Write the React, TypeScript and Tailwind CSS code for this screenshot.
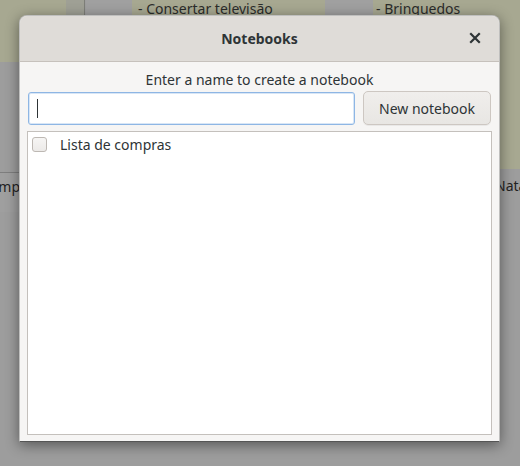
import React from "react";

export default function App() {
  return (
    <div
      className="relative w-[520px] h-[466px] overflow-hidden bg-[#9d9d9d]"
      style={{ fontFamily: '"Noto Sans", "Open Sans", sans-serif' }}
    >
      {/* dimmed background application */}
      <div className="absolute left-0 top-0 w-[66px] h-[62px] bg-[#a7a891]" />
      <div className="absolute left-[66px] top-0 w-[19px] h-[62px] bg-[#9fa095] border-r border-[#7d7e78]" />
      <div className="absolute left-[86px] top-0 w-[46px] h-[62px] bg-[#a0a0a0]" />
      <div className="absolute left-[132px] top-0 w-[193px] h-[62px] bg-[#a7a891] pl-[6px] text-[14px] leading-[18px] text-[#2b2c2a]">
        - Consertar televisão
      </div>
      <div className="absolute left-[325px] top-0 w-[48px] h-[62px] bg-[#a0a0a0]" />
      <div className="absolute left-[373px] top-0 w-[147px] h-[169px] bg-[#a7a891] pl-[3px] text-[14px] leading-[18px] text-[#2b2c2a]">
        - Bringuedos
      </div>
      <div className="absolute left-0 top-[172px] w-[20px] h-[40px] border-t border-[#7e7e7e] bg-[#9f9f9f] text-[14px] leading-[28px] text-[#222] overflow-hidden whitespace-nowrap">
        <span className="ml-[-19px]">Comp</span>
      </div>
      <div className="absolute left-[495px] top-[169px] w-[25px] h-[40px] text-[14px] leading-[34px] text-[#222] overflow-hidden whitespace-nowrap">
        Natal
      </div>

      {/* dialog */}
      <div className="absolute left-[19px] top-[15px] w-[481px] h-[427px] rounded-t-[8px] bg-[#f6f5f4] border border-[#6e6e6e]/40 border-b-[#555] shadow-[0_3px_14px_rgba(0,0,0,0.45)] flex flex-col overflow-hidden">
        <div className="h-[46px] shrink-0 bg-[#dfdcd8] border-b border-[#c6c1bc] flex items-center relative">
          <div className="flex-1 text-center text-[14px] font-bold text-[#2e3436] -mt-[1px]">Notebooks</div>
          <svg
            className="absolute right-[18px] top-[16px]"
            width="12"
            height="12"
            viewBox="0 0 12 12"
          >
            <path d="M2 2 L10 10 M10 2 L2 10" stroke="#2e3436" strokeWidth="2.2" strokeLinecap="square" />
          </svg>
        </div>
        <div className="flex-1 flex flex-col px-[7px] pt-[8px] pb-[6px]">
          <div className="text-center text-[14px] leading-[20px] text-[#2e3436]">
            Enter a name to create a notebook
          </div>
          <div className="flex gap-[8px] mt-[2px] pl-[1px] pr-[1px]">
            <div className="w-[327px] h-[33px] bg-white border border-[#8eb6e4] rounded-[3px] flex items-center pl-[8px] shadow-[inset_0_0_0_1px_rgba(142,182,228,0.35)]">
              <div className="w-px h-[19px] bg-[#2e3436]" />
            </div>
            <div className="flex-1 h-[34px] -mt-[1px] rounded-[5px] border border-[#cdc7c2] bg-gradient-to-b from-[#f0eeec] to-[#e8e6e3] flex items-center justify-center text-[14px] text-[#2e3436] shadow-[0_1px_0_rgba(0,0,0,0.05)]">
              New notebook
            </div>
          </div>
          <div className="flex-1 mt-[6px] bg-white border border-[#c4c0bc]">
            <div className="flex items-center h-[25px] pl-[4px]">
              <div className="w-[15px] h-[15px] rounded-[3px] border border-[#bdb8b3] bg-gradient-to-b from-[#f6f5f4] to-[#eceae8]" />
              <span className="ml-[13px] text-[14px] text-[#2e3436]">Lista de compras</span>
            </div>
          </div>
        </div>
      </div>
    </div>
  );
}
